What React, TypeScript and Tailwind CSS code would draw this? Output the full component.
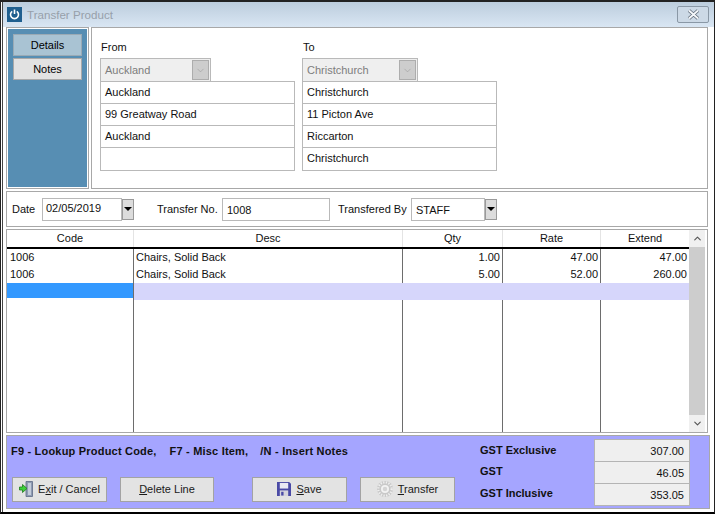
import { ChevronDown, ChevronUp } from "lucide-react";

const rows = [
  { code: "1006", desc: "Chairs, Solid Back", qty: "1.00", rate: "47.00", extend: "47.00" },
  { code: "1006", desc: "Chairs, Solid Back", qty: "5.00", rate: "52.00", extend: "260.00" },
];

const colDivider = "border-r border-[#6d6d6d]";

function DisabledCombo({ value, width }: { value: string; width: string }) {
  return (
    <div
      className={`flex h-[24px] ${width} items-center justify-between border border-[#b9b9b9] bg-[#efefef] pl-[4px] pr-[1px] text-[#7d7d7d]`}
    >
      <span>{value}</span>
      <span className="flex h-[20px] w-[17px] items-center justify-center border border-[#adadad] bg-[#cdcdcd]">
        <ChevronDown size={11} strokeWidth={1} className="text-[#8d8d8d]" />
      </span>
    </div>
  );
}

function AddressBlock({
  label,
  combo,
  comboWidth,
  lines,
}: {
  label: string;
  combo: string;
  comboWidth: string;
  lines: string[];
}) {
  return (
    <div className="flex w-[195px] flex-col">
      <div className="mb-[3px] h-[16px] pl-px leading-[16px]">{label}</div>
      <DisabledCombo value={combo} width={comboWidth} />
      <div className="-mt-px border border-[#b9b9b9]">
        {lines.map((line, i) => (
          <div
            key={i}
            className={`h-[22px] bg-white pl-[4px] leading-[21px] ${i < 3 ? "border-b border-[#b9b9b9]" : ""}`}
          >
            {line}
          </div>
        ))}
      </div>
    </div>
  );
}

function DropArrow() {
  return (
    <span className="flex h-[21px] w-[12px] items-center justify-center border border-[#9a9a9a] bg-[#dcdcdc]">
      <span className="h-0 w-0 border-x-[4px] border-t-[4px] border-x-transparent border-t-black" />
    </span>
  );
}

function Button({ width, children }: { width: string; children: React.ReactNode }) {
  return (
    <button
      className={`flex h-[25px] ${width} items-center justify-center gap-[5px] border border-[#a3a3a3] bg-[#e3e3e3] text-[11px] text-[#1a1a1a]`}
    >
      {children}
    </button>
  );
}

function ExitIcon() {
  return (
    <svg width="14" height="16" viewBox="0 0 14 16">
      <path d="M7 0.5h6.5v15H7z" fill="#8f9cb3" stroke="#5d6a85" strokeWidth="0.8" />
      <path d="M9 2h3v12H9z" fill="#c4ccda" />
      <path d="M0.5 6h3V3.5L8 7.5l-4.5 4V9h-3z" fill="#3ed13a" stroke="#1d7a1b" strokeWidth="0.8" />
    </svg>
  );
}

function SaveIcon() {
  return (
    <svg width="14" height="14" viewBox="0 0 15 15">
      <path d="M0 0h13l2 2v13H0z" fill="#4a4aa6" />
      <rect x="3" y="1" width="9" height="6" fill="#e9e9f4" />
      <rect x="3" y="9" width="9" height="6" fill="#d5d5dd" />
      <rect x="4.5" y="10.5" width="2.5" height="4" fill="#4a4aa6" />
    </svg>
  );
}

function TransferIcon() {
  return (
    <svg width="16" height="16" viewBox="0 0 18 18">
      <circle cx="9" cy="9" r="9" fill="#c8c8c8" />
      <circle cx="9" cy="9" r="7.5" fill="none" stroke="#efefef" strokeWidth="2.5" strokeDasharray="1.5 1.5" />
      <circle cx="9" cy="9" r="4.5" fill="#f2f2f2" />
      <circle cx="9" cy="9" r="2.5" fill="#d4d4d4" />
    </svg>
  );
}

function TotalCell({ value, last }: { value: string; last?: boolean }) {
  return (
    <div
      className={`h-[22px] pr-[5px] text-right leading-[22px] ${last ? "" : "border-b border-[#b4b4b4]"}`}
    >
      {value}
    </div>
  );
}

export default function App() {
  return (
    <div
      className="h-[514px] w-[715px] overflow-hidden border-x border-t-2 border-b-2 border-x-[#222] border-t-[#222] border-b-black bg-white text-[11px] text-[#111]"
      style={{ fontFamily: '"Liberation Sans", Arial, sans-serif' }}
    >
      <div className="ml-px flex h-full flex-col border-l border-[#444]">
        {/* Title bar */}
        <div className="flex h-[25px] shrink-0 items-center justify-between bg-gradient-to-b from-[#bccddd] to-[#d9e6f3] pl-[4px] pr-[5px]">
          <div className="flex items-center gap-[5px]">
            <span className="flex h-[15px] w-[15px] items-center justify-center bg-[#1f5f8f]">
              <svg width="11" height="11" viewBox="0 0 11 11" fill="none" stroke="#fff" strokeWidth="1.6">
                <path d="M3.2 2.4a4 4 0 1 0 4.6 0" />
                <path d="M5.5 0.5v4.5" />
              </svg>
            </span>
            <span className="text-[11.6px] text-[#97a0aa]">Transfer Product</span>
          </div>
          <span className="flex h-[17px] w-[32px] items-center justify-center rounded-[2px] border border-[#8a98a6] bg-[#ccd9e6]">
            <svg width="15" height="11" viewBox="0 0 15 11">
              <path d="M3 1.5l9 8M12 1.5l-9 8" fill="none" stroke="#5f6b78" strokeWidth="3.4" />
              <path d="M3 1.5l9 8M12 1.5l-9 8" fill="none" stroke="#f5f7fa" strokeWidth="1.8" />
            </svg>
          </span>
        </div>

        <div className="flex min-h-0 flex-1 flex-col gap-[2px] border-b-[3px] border-white pl-[3px] pr-[6px]">
          {/* Top section */}
          <div className="flex h-[162px] shrink-0 gap-[2px]">
            <div className="w-[83px] border border-[#a8a8a8] p-[1px]">
              <div className="flex h-full flex-col gap-[2px] bg-[#578eb3] px-[5px] pt-[5px]">
                <div className="h-[22px] border border-[#9aaab5] bg-[#a9c3d3] text-center leading-[20px] text-black">
                  Details
                </div>
                <div className="h-[22px] border border-[#a9a9a9] bg-[#e2e2e2] text-center leading-[20px] text-black">
                  Notes
                </div>
              </div>
            </div>
            <div className="flex flex-1 gap-[7px] border border-[#a8a8a8] pl-[8px] pt-[11px]">
              <AddressBlock
                label="From"
                combo="Auckland"
                comboWidth="w-[111px]"
                lines={["Auckland", "99 Greatway Road", "Auckland", ""]}
              />
              <AddressBlock
                label="To"
                combo="Christchurch"
                comboWidth="w-[116px]"
                lines={["Christchurch", "11 Picton Ave", "Riccarton", "Christchurch"]}
              />
            </div>
          </div>

          {/* Date row */}
          <div className="flex h-[36px] shrink-0 items-center whitespace-nowrap border border-[#a8a8a8] pl-[5px]">
            <span className="w-[30px]">Date</span>
            <div className="h-[23px] w-[80px] border border-[#b9b9b9] pl-[3px] leading-[19px]">02/05/2019</div>
            <DropArrow />
            <span className="ml-[23px] w-[65px]">Transfer No.</span>
            <div className="h-[23px] w-[108px] border border-[#b9b9b9] pl-[4px] leading-[22px]">1008</div>
            <span className="ml-[8px] w-[73px]">Transfered By</span>
            <div className="h-[23px] w-[74px] border border-[#b9b9b9] pl-[4px] leading-[22px]">STAFF</div>
            <DropArrow />
          </div>

          {/* Grid */}
          <div className="flex min-h-0 flex-1 border border-[#a8a8a8]">
            <div className="flex min-w-0 flex-1 flex-col">
              <div className="flex h-[19px] shrink-0 border-b-2 border-black text-center leading-[17px]">
                <div className="w-[127px] border-r border-[#e4e4e4]">Code</div>
                <div className="w-[269px] border-r border-[#e4e4e4]">Desc</div>
                <div className="w-[100px] border-r border-[#e4e4e4]">Qty</div>
                <div className="w-[98px] border-r border-[#e4e4e4]">Rate</div>
                <div className="flex-1">Extend</div>
              </div>
              {rows.map((r, i) => (
                <div key={i} className="flex h-[17px] shrink-0 leading-[17px]">
                  <div className={`w-[127px] pl-[3px] ${colDivider}`}>{r.code}</div>
                  <div className={`w-[269px] pl-[2px] ${colDivider}`}>{r.desc}</div>
                  <div className={`w-[100px] pr-[2px] text-right ${colDivider}`}>{r.qty}</div>
                  <div className={`w-[98px] pr-[2px] text-right ${colDivider}`}>{r.rate}</div>
                  <div className="flex-1 pr-[2px] text-right">{r.extend}</div>
                </div>
              ))}
              <div className="flex h-[17px] shrink-0 bg-[#d6d6fb]">
                <div className="w-[127px] border-r border-[#6d6d6d] bg-white">
                  <div className="h-[15px] bg-[#3399ff]" />
                </div>
                <div className="flex-1" />
              </div>
              <div className="flex min-h-0 flex-1">
                <div className={`w-[127px] ${colDivider}`} />
                <div className={`w-[269px] ${colDivider}`} />
                <div className={`w-[100px] ${colDivider}`} />
                <div className={`w-[98px] ${colDivider}`} />
                <div className="flex-1" />
              </div>
            </div>
            <div className="flex w-[18px] shrink-0 flex-col border-r-2 border-white bg-[#f0f0f0]">
              <div className="flex h-[17px] items-center justify-center">
                <ChevronUp size={11} strokeWidth={2.5} className="text-[#555]" />
              </div>
              <div className="flex-1 bg-[#cdcdcd]" />
              <div className="flex h-[17px] items-center justify-center">
                <ChevronDown size={11} strokeWidth={2.5} className="text-[#555]" />
              </div>
            </div>
          </div>

          {/* Footer */}
          <div className="-mr-[2px] flex h-[74px] shrink-0 border border-[#a8a8a8] bg-[#a5a5ff] pl-[4px] pr-[19px]">
            <div className="flex w-[469px] flex-col pt-[7px]">
              <div className="text-[11px] font-bold tracking-[0.2px]">
                F9 - Lookup Product Code,<span className="ml-[13px]">F7 - Misc Item,</span>
                <span className="ml-[12px]">/N - Insert Notes</span>
              </div>
              <div className="ml-px mt-[17px] flex">
                <Button width="w-[95px]">
                  <ExitIcon />
                  <span>
                    E<u>x</u>it / Cancel
                  </span>
                </Button>
                <span className="ml-[13px]">
                  <Button width="w-[94px]">
                    <span>
                      <u>D</u>elete Line
                    </span>
                  </Button>
                </span>
                <span className="ml-[38px]">
                  <Button width="w-[95px]">
                    <SaveIcon />
                    <span>
                      <u>S</u>ave
                    </span>
                  </Button>
                </span>
                <span className="ml-[13px]">
                  <Button width="w-[95px]">
                    <TransferIcon />
                    <span>
                      <u>T</u>ransfer
                    </span>
                  </Button>
                </span>
              </div>
            </div>
            <div className="flex w-[114px] flex-col gap-[5px] pt-[6px] font-bold">
              <div className="leading-[16px]">GST Exclusive</div>
              <div className="leading-[16px]">GST</div>
              <div className="mt-px leading-[16px]">GST Inclusive</div>
            </div>
            <div className="mt-[3px] h-[67px] w-[96px] border border-[#b4b4b4] bg-[#efefef]">
              <TotalCell value="307.00" />
              <TotalCell value="46.05" />
              <TotalCell value="353.05" last />
            </div>
          </div>
        </div>
      </div>
    </div>
  );
}
